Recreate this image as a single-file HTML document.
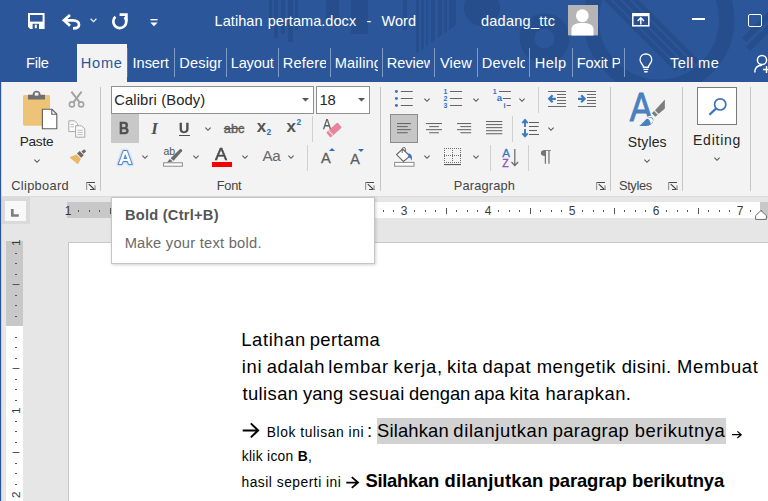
<!DOCTYPE html><html><head><meta charset="utf-8"><title>Latihan pertama.docx - Word</title><style>
*{box-sizing:border-box;margin:0;padding:0}
html,body{width:768px;height:501px;overflow:hidden;background:#e6e6e6;font-family:"Liberation Sans",sans-serif;}
.abs{position:absolute}
#top{position:absolute;left:0;top:0;width:768px;height:82px;background:#2b579a;overflow:hidden}
.tt{position:absolute;color:#fff;font-size:14.5px;white-space:nowrap;line-height:20px}
.tab{position:absolute;top:52px;height:22px;color:#fff;font-size:14.6px;line-height:22px;white-space:nowrap;overflow:hidden}
.tsep{position:absolute;top:48px;width:1px;height:29px;background:#7f9ac4}
#ribbon{position:absolute;left:2px;top:82px;width:766px;height:114.5px;background:#f3f3f3;border-bottom:1px solid #dcdcdc}
.rl{position:absolute;color:#444;font-size:12.8px;line-height:16px;white-space:nowrap;top:178px}
.gsep{position:absolute;top:87px;width:1px;height:104px;background:#c6c6c6}
.ssep{position:absolute;width:1px;height:26px;background:#d0d0d0}
.big{position:absolute;color:#262626;font-size:14px;line-height:18px;white-space:nowrap}
svg{position:absolute;overflow:visible}
.doc{position:absolute;white-space:nowrap;color:#000;}
</style></head><body>
<div id="top">
<svg width="768" height="82" viewBox="0 0 768 82" style="left:0;top:0">
<defs><clipPath id="cIn"><circle cx="659" cy="19.5" r="58"/></clipPath><clipPath id="cSt"><path d="M410 0 H460 V22 L410 58 Z"/></clipPath></defs>
<g fill="none" stroke="#264e8c">
<circle cx="659" cy="19.5" r="67.7" stroke-width="15.5"/>
<circle cx="544.5" cy="38.5" r="17.5" stroke-width="15"/>
</g>
<circle cx="482" cy="8" r="18" fill="#264e8c"/>
<g fill="#264e8c">
<rect x="269" y="0" width="3" height="30"/><rect x="274" y="0" width="4" height="38"/><rect x="281" y="0" width="4" height="34"/><rect x="288" y="0" width="5" height="42"/><rect x="295" y="0" width="3" height="30"/>
<rect x="326" y="0" width="13" height="26"/><rect x="351" y="0" width="17" height="34"/>
<rect x="403" y="0" width="4" height="30"/>
<g clip-path="url(#cSt)"><rect x="416" y="0" width="3" height="60"/><rect x="421" y="0" width="3" height="60"/><rect x="426" y="0" width="2" height="60"/><rect x="431" y="0" width="4" height="60"/><rect x="438" y="0" width="4" height="60"/><rect x="444" y="0" width="3" height="60"/><rect x="449" y="0" width="7" height="60"/></g>
</g>
<g stroke="#264e8c" stroke-width="4.8" clip-path="url(#cIn)">
<path d="M597 -10 L677 70 M606.5 -10 L686.5 70 M616 -10 L696 70 M625.5 -10 L705.5 70"/>
</g>
<g stroke="#264e8c" stroke-width="6">
<path d="M772 12 L744 40 M772 25 L748 49"/>
</g>
</svg>
<svg width="17" height="16" viewBox="0 0 17 16" style="left:27.8px;top:13.1px">
<path d="M1 1 H15.6 V15 H2.6 L1 13.4 Z" fill="none" stroke="#fff" stroke-width="2"/>
<rect x="1" y="8.6" width="14.6" height="6.4" fill="#fff"/><rect x="4.6" y="10.8" width="6.4" height="5.2" fill="#2b579a"/><rect x="6.8" y="11.6" width="2" height="3.6" fill="#fff"/>
</svg>
<svg width="19" height="16" viewBox="0 0 19 16" style="left:62px;top:13.5px">
<path d="M8 0.9 L1.9 6.3 L8 11.7" fill="none" stroke="#fff" stroke-width="2.7" stroke-linejoin="miter"/>
<path d="M2.6 6.3 H11 C14.8 6.3 17 8.3 17 10.7 C17 13 15 14.3 11 14.3" fill="none" stroke="#fff" stroke-width="2.7"/>
</svg>
<svg width="7" height="5" viewBox="0 0 7 5" style="left:89.8px;top:18.2px"><path d="M0.6 0.8 L3.5 3.7 L6.4 0.8" fill="none" stroke="#e8edf5" stroke-width="1.3"/></svg>
<svg width="18" height="16" viewBox="0 0 18 16" style="left:111px;top:13.3px">
<path d="M4.4 3.8 A6.5 6.5 0 1 0 13.6 4.2" fill="none" stroke="#fff" stroke-width="2.7"/>
<path d="M8.6 1.6 H15.4 V8" fill="none" stroke="#fff" stroke-width="2.7"/>
</svg>
<svg width="8" height="8" viewBox="0 0 8 8" style="left:150px;top:19px"><rect x="0.5" y="0" width="7" height="1.4" fill="#fff"/><path d="M0.3 3.4 H7.7 L4 7.2 Z" fill="#fff"/></svg>
<div class="tt" style="left:214.61px;top:11px;word-spacing:1px;letter-spacing:0.059px" id="title">Latihan pertama.docx&nbsp; -&nbsp; Word</div>
<div class="tt" style="left:480.92px;top:11px;letter-spacing:0.271px" id="user">dadang_ttc</div>
<svg width="30" height="30.4" viewBox="0 0 31 31" preserveAspectRatio="none" style="left:568px;top:4.9px"><rect width="31" height="31" fill="#b5b5b5"/>
<circle cx="14.8" cy="11" r="6.6" fill="#fff"/><path d="M3.6 31 V25 C3.6 20 8 18.4 14.8 18.4 C21.6 18.4 26.4 20 26.4 25 V31 Z" fill="#fff"/></svg>
<svg width="18" height="14" viewBox="0 0 18 14" style="left:631.6px;top:13.2px"><rect x="0.8" y="0.8" width="16" height="12" fill="none" stroke="#fff" stroke-width="1.5"/><rect x="0.8" y="0.8" width="16" height="2.4" fill="#fff"/>
<path d="M8.8 11.6 V5.4 M5.6 8 L8.8 4.8 L12 8" fill="none" stroke="#fff" stroke-width="1.4"/></svg>
<div class="abs" style="left:692px;top:18.3px;width:12.5px;height:1.8px;background:#fff"></div>
<div class="abs" style="left:748.3px;top:13.5px;width:13.6px;height:13.2px;border:1.7px solid #fff;border-radius:2px"></div>
<div class="tab" style="left:25.91px;width:40px;letter-spacing:-0.18px" id="tFile">File</div>
<div class="abs" style="left:77px;top:44px;width:50px;height:38px;background:#f3f3f3"></div>
<div class="tab" style="left:80.65px;width:46px;color:#2b579a;letter-spacing:0.793px" id="tHome">Home</div>
<div class="tab" style="left:132.61px;width:41.7px;letter-spacing:-0.074px" id="t0">Insert</div>
<div class="tab" style="left:179.3px;width:43.2px;letter-spacing:0.15px" id="t1">Design</div>
<div class="tab" style="left:230.7px;width:43.7px;letter-spacing:-0.154px" id="t2">Layout</div>
<div class="tab" style="left:282.8px;width:43.7px;letter-spacing:0.15px" id="t3">References</div>
<div class="tab" style="left:334.8px;width:43.7px;letter-spacing:0.15px" id="t4">Mailings</div>
<div class="tab" style="left:386.8px;width:43.7px;letter-spacing:-0.05px" id="t5">Review</div>
<div class="tab" style="left:440px;width:34.7px;letter-spacing:0.11px" id="t6">View</div>
<div class="tab" style="left:481.8px;width:43.2px;letter-spacing:0.15px" id="t7">Developer</div>
<div class="tab" style="left:534.7px;width:34.2px;letter-spacing:0.476px" id="t8">Help</div>
<div class="tab" style="left:576.8px;width:43.7px;letter-spacing:-0.15px" id="t9">Foxit PDF</div>
<div class="tsep" style="left:127px;background:#5474ad"></div>
<div class="tsep" style="left:174px"></div>
<div class="tsep" style="left:226px"></div>
<div class="tsep" style="left:278px"></div>
<div class="tsep" style="left:330px"></div>
<div class="tsep" style="left:382px"></div>
<div class="tsep" style="left:434px"></div>
<div class="tsep" style="left:477px"></div>
<div class="tsep" style="left:529px"></div>
<div class="tsep" style="left:572px"></div>
<div class="tsep" style="left:624px"></div>
<svg width="13.8" height="20" viewBox="0 0 16 20" preserveAspectRatio="none" style="left:639.1px;top:53.2px">
<path d="M5.2 14.2 C5.2 11.5 1.2 10.5 1.2 6.8 C1.2 3.2 4.2 0.9 8 0.9 C11.8 0.9 14.8 3.2 14.8 6.8 C14.8 10.5 10.8 11.5 10.8 14.2 Z" fill="none" stroke="#fff" stroke-width="1.5"/>
<path d="M5.2 16.4 H10.8 M6 18.8 H10" stroke="#fff" stroke-width="1.4"/></svg>
<div class="tab" style="left:670px;width:60px;letter-spacing:0.421px" id="tTell">Tell me</div>
<svg width="16" height="20" viewBox="0 0 16 20" style="left:754px;top:54px"><circle cx="8" cy="6" r="4.6" fill="none" stroke="#fff" stroke-width="1.5"/>
<path d="M0.8 18.5 C0.8 13.5 4 11.2 8 11.2" fill="none" stroke="#fff" stroke-width="1.5"/><path d="M9 15.4 H16 M12.5 12 V19" stroke="#fff" stroke-width="1.5"/></svg>
</div>
<div class="abs" style="left:0;top:82px;width:1px;height:419px;background:#2b579a"></div><div class="abs" style="left:1px;top:82px;width:1px;height:115px;background:#d0d8e4"></div><div class="abs" style="left:1px;top:197px;width:1px;height:304px;background:#c6ceda"></div>
<div id="ribbon"></div>
<svg width="36" height="40" viewBox="0 0 36 40" style="left:22px;top:90px">
<rect x="1" y="5" width="27" height="30.7" rx="1.6" fill="#edc377"/>
<path d="M6 9.4 V4.8 H10.6 C10.8 2.2 12.4 0.8 14.6 0.8 C16.8 0.8 18.4 2.2 18.6 4.8 H23 V9.4 Z" fill="#6f6f6f"/><rect x="12.8" y="2.6" width="3.6" height="3" fill="#f3f3f3"/>
<path d="M20.4 19.3 H30 L34.8 24.1 V38.7 H20.4 Z" fill="#fff" stroke="#5e5e5e" stroke-width="1.1"/><path d="M29.8 19.5 V24.3 H34.6" fill="none" stroke="#5e5e5e" stroke-width="1.1"/>
</svg>
<div class="big" style="left:19.71px;top:133px;font-size:13.6px;letter-spacing:-0.229px" id="bPaste">Paste</div>
<svg width="6" height="4" viewBox="0 0 6 3.6" style="left:34px;top:159px"><path d="M0.4 0.5 L3 3.1 L5.6 0.5" fill="none" stroke="#555" stroke-width="1.1"/></svg>
<svg width="17" height="17" viewBox="0 0 17 17" style="left:68px;top:90.5px"><g fill="none" stroke="#a3a3a3">
<path d="M3.4 0.6 L11.4 11.2 M13.6 0.6 L5.6 11.2" stroke-width="2"/><circle cx="3.9" cy="13.4" r="2.5" stroke-width="1.6"/><circle cx="13.1" cy="13.4" r="2.5" stroke-width="1.6"/></g></svg>
<svg width="18" height="18" viewBox="0 0 18 18" style="left:68px;top:119.5px"><g fill="#fbfbfb" stroke="#a8a8a8" stroke-width="1">
<path d="M0.8 0.8 H6.6 L9.6 3.8 V11.6 H0.8 Z"/><path d="M7.6 5.8 H13.6 L16.8 9 V17.2 H7.6 Z"/></g>
<g stroke="#b5b5b5" stroke-width="0.9"><path d="M2.4 4.4 H6 M2.4 6.8 H6 M9.4 10.2 H14.8 M9.4 12.4 H14.8 M9.4 14.6 H14.8"/></g></svg>
<svg width="18" height="16" viewBox="0 0 18 16" style="left:68.6px;top:149px">
<path d="M0.3 8.2 L7.6 5.6 L12 10 L8.8 15.2 Z" fill="#e9b968"/>
<path d="M8 4.6 L10.6 2 L14.8 6.2 L12.2 8.8 Z" fill="#6a6a6a"/><path d="M12.4 2.6 L15.2 0.2 L17.2 2.2 L14.6 4.8 Z" fill="#6a6a6a"/></svg>
<div class="rl" style="left:11.18px;letter-spacing:0.345px" id="lClip">Clipboard</div>
<svg width="10" height="9" viewBox="0 0 10 9" style="left:86.2px;top:182px"><rect x="0" y="0" width="9" height="1" fill="#4a4a4a"/><rect x="0" y="0" width="1.2" height="8" fill="#9a9a9a"/><path d="M2.8 2.2 L8.6 7.6" stroke="#3a3a3a" stroke-width="1.1"/><rect x="4" y="7" width="5.6" height="1" fill="#4a4a4a"/><rect x="8.4" y="3.2" width="1.2" height="4.8" fill="#9a9a9a"/></svg>
<div class="gsep" style="left:100px"></div>
<div class="abs" style="left:111px;top:85.5px;width:203px;height:28px;background:#fff;border:1px solid #8f8f8f"></div>
<div class="big" style="left:114.18px;top:91px;font-size:14.8px;letter-spacing:0.115px" id="fName">Calibri (Body)</div>
<svg width="7" height="4" viewBox="0 0 7 4" style="left:301.5px;top:98px"><path d="M0 0 H7 L3.5 3.6 Z" fill="#555"/></svg>
<div class="abs" style="left:316px;top:85.5px;width:54px;height:28px;background:#fff;border:1px solid #8f8f8f"></div>
<div class="big" style="left:319.51px;top:91px;font-size:14.8px;letter-spacing:-0.277px" id="fSize">18</div>
<svg width="7" height="4" viewBox="0 0 7 4" style="left:357.5px;top:98px"><path d="M0 0 H7 L3.5 3.6 Z" fill="#555"/></svg>
<div class="abs" style="left:111px;top:114px;width:28px;height:29px;background:#c8c8c8"></div>
<div class="abs" style="left:119.2px;top:117.6px;font-size:16.2px;font-weight:bold;color:#505050;line-height:20px;transform:scaleX(0.86);transform-origin:0 0;-webkit-text-stroke:0.45px #505050" id="bB">B</div>
<div class="abs" style="left:151.3px;top:118.5px;font-size:17px;font-weight:bold;font-style:italic;color:#505050;line-height:20px;font-family:'Liberation Serif',serif" id="bI">I</div>
<div class="abs" style="left:179.3px;top:117.6px;font-size:15.2px;font-weight:bold;color:#505050;line-height:20px;transform:scaleX(0.93);transform-origin:0 0;-webkit-text-stroke:0.3px #505050" id="bU">U</div>
<div class="abs" style="left:179.3px;top:134.8px;width:10.3px;height:1.2px;background:#505050"></div>
<svg width="6" height="4" viewBox="0 0 6 3.6" style="left:205px;top:126.5px"><path d="M0.4 0.5 L3 3.1 L5.6 0.5" fill="none" stroke="#555" stroke-width="1.1"/></svg>
<div class="abs" style="left:223.8px;top:119.3px;font-size:12.8px;color:#5c5c5c;line-height:20px;text-decoration:line-through;-webkit-text-stroke:0.35px #5c5c5c" id="bAbc">abc</div>
<div class="abs" style="left:256.8px;top:117.3px;font-size:17px;font-weight:bold;color:#555;line-height:20px" id="bSub">x</div>
<div class="abs" style="left:266.4px;top:127.3px;font-size:8.4px;font-weight:bold;color:#2f6dbf;line-height:10px">2</div>
<div class="abs" style="left:286.6px;top:117.3px;font-size:17px;font-weight:bold;color:#555;line-height:20px" id="bSup">x</div>
<div class="abs" style="left:296.6px;top:117.2px;font-size:8.4px;font-weight:bold;color:#2f6dbf;line-height:10px">2</div>
<div class="ssep" style="left:312px;top:115.5px"></div>
<div class="abs" style="left:323.4px;top:116.3px;font-size:14px;color:#5a5a5a;line-height:16px;transform:scaleX(0.86);transform-origin:0 0;-webkit-text-stroke:0.25px #5a5a5a" id="bClrA">A</div>
<svg width="20" height="20" viewBox="0 0 20 20" style="left:323.7px;top:120.3px"><g transform="translate(10,10) rotate(-42)"><rect x="-7.6" y="-3.4" width="15.2" height="6.8" rx="1.3" fill="#e8849b"/><rect x="-4.9" y="-3.4" width="1" height="6.8" fill="#f7e9ec"/></g></svg>
<svg width="20" height="20" viewBox="0 0 20 20" style="left:115.2px;top:146.6px"><defs><filter id="gl" x="-30%" y="-30%" width="160%" height="160%"><feGaussianBlur stdDeviation="0.9"/></filter></defs>
<text x="10" y="17" text-anchor="middle" font-family="Liberation Sans, sans-serif" font-size="19" font-weight="bold" fill="none" stroke="#9cc3f0" stroke-width="2.4" filter="url(#gl)">A</text>
<text x="10" y="17" text-anchor="middle" font-family="Liberation Sans, sans-serif" font-size="19" font-weight="bold" fill="#fff" stroke="#2f78cf" stroke-width="1.7" paint-order="stroke">A</text></svg>
<svg width="6" height="4" viewBox="0 0 6 3.6" style="left:141.8px;top:155px"><path d="M0.4 0.5 L3 3.1 L5.6 0.5" fill="none" stroke="#555" stroke-width="1.1"/></svg>
<div class="abs" style="left:163.5px;top:144.5px;font-size:10.5px;color:#555;line-height:12px">ab</div>
<svg width="20" height="19" viewBox="0 0 20 19" style="left:163px;top:148px"><path d="M7.6 10.2 L16.8 1.2 C18 0.4 19.8 1.8 19 3.2 L10.6 12.8 Z" fill="#6a6a6a"/><path d="M6.8 11 L9.8 13.6 L4 14.4 Z" fill="#6a6a6a"/>
<rect x="0.6" y="14.8" width="18.8" height="3.4" fill="#fff" stroke="#8a8a8a" stroke-width="1"/></svg>
<svg width="6" height="4" viewBox="0 0 6 3.6" style="left:192.7px;top:155px"><path d="M0.4 0.5 L3 3.1 L5.6 0.5" fill="none" stroke="#555" stroke-width="1.1"/></svg>
<div class="abs" style="left:215.4px;top:144.2px;font-size:17.2px;color:#4a4a4a;line-height:20px;-webkit-text-stroke:0.5px #4a4a4a;transform:scaleX(1.05);transform-origin:0 0" id="bFc">A</div>
<div class="abs" style="left:212px;top:162px;width:20px;height:4.8px;background:#f80000"></div>
<svg width="6" height="4" viewBox="0 0 6 3.6" style="left:242px;top:155px"><path d="M0.4 0.5 L3 3.1 L5.6 0.5" fill="none" stroke="#555" stroke-width="1.1"/></svg>
<div class="abs" style="left:262.6px;top:146.4px;font-size:15.2px;color:#666;line-height:20px;letter-spacing:-0.4px" id="bAa">Aa</div>
<svg width="6" height="4" viewBox="0 0 6 3.6" style="left:288.1px;top:155px"><path d="M0.4 0.5 L3 3.1 L5.6 0.5" fill="none" stroke="#555" stroke-width="1.1"/></svg>
<div class="ssep" style="left:307px;top:144.5px"></div>
<div class="abs" style="left:321px;top:149.2px;font-size:14.6px;color:#5c5c5c;line-height:18px;-webkit-text-stroke:0.3px #5c5c5c" id="bGrow">A</div>
<svg width="6" height="3" viewBox="0 0 6 3" style="left:329.2px;top:148.3px"><path d="M0 3 H6 L3 0 Z" fill="#2f6dbf"/></svg>
<div class="abs" style="left:350.2px;top:150px;font-size:14.3px;color:#5c5c5c;line-height:18px;-webkit-text-stroke:0.3px #5c5c5c" id="bShrink">A</div>
<svg width="6" height="3" viewBox="0 0 6 3" style="left:358px;top:148.6px"><path d="M0 0 H6 L3 3 Z" fill="#2f6dbf"/></svg>
<div class="rl" style="left:216.73px;letter-spacing:-0.237px" id="lFont">Font</div>
<svg width="10" height="9" viewBox="0 0 10 9" style="left:365.2px;top:182px"><rect x="0" y="0" width="9" height="1" fill="#4a4a4a"/><rect x="0" y="0" width="1.2" height="8" fill="#9a9a9a"/><path d="M2.8 2.2 L8.6 7.6" stroke="#3a3a3a" stroke-width="1.1"/><rect x="4" y="7" width="5.6" height="1" fill="#4a4a4a"/><rect x="8.4" y="3.2" width="1.2" height="4.8" fill="#9a9a9a"/></svg>
<div class="gsep" style="left:380px"></div>
<svg width="19" height="17" viewBox="0 0 19 17" style="left:394px;top:90px"><circle cx="2.4" cy="1.5" r="1.45" fill="#2f72c8"/><rect x="6.8" y="1" width="12" height="1" fill="#666"/><circle cx="2.4" cy="8.5" r="1.45" fill="#2f72c8"/><rect x="6.8" y="8" width="12" height="1" fill="#666"/><circle cx="2.4" cy="15.5" r="1.45" fill="#2f72c8"/><rect x="6.8" y="15" width="12" height="1" fill="#666"/></svg>
<svg width="6" height="4" viewBox="0 0 6 3.6" style="left:424.3px;top:97.5px"><path d="M0.4 0.5 L3 3.1 L5.6 0.5" fill="none" stroke="#555" stroke-width="1.1"/></svg>
<svg width="19" height="17" viewBox="0 0 19 17" style="left:443px;top:90px"><text x="0.6" y="4" font-family="Liberation Sans, sans-serif" font-size="7" font-weight="bold" fill="#2f72c8">1</text><rect x="6.9" y="1" width="12.2" height="1" fill="#666"/><text x="0.6" y="11" font-family="Liberation Sans, sans-serif" font-size="7" font-weight="bold" fill="#2f72c8">2</text><rect x="6.9" y="8" width="12.2" height="1" fill="#666"/><text x="0.6" y="18" font-family="Liberation Sans, sans-serif" font-size="7" font-weight="bold" fill="#2f72c8">3</text><rect x="6.9" y="15" width="12.2" height="1" fill="#666"/></svg>
<svg width="6" height="4" viewBox="0 0 6 3.6" style="left:473px;top:97.5px"><path d="M0.4 0.5 L3 3.1 L5.6 0.5" fill="none" stroke="#555" stroke-width="1.1"/></svg>
<svg width="19" height="17" viewBox="0 0 19 17" style="left:492px;top:90px"><text x="0.7" y="4" font-family="Liberation Sans, sans-serif" font-size="7" font-weight="bold" fill="#2f72c8">1</text><rect x="7" y="1" width="11.9" height="1" fill="#666"/><text x="4.8" y="10.6" font-family="Liberation Sans, sans-serif" font-size="9.5" font-weight="bold" fill="#2f72c8">a</text><rect x="10.8" y="8" width="8.1" height="1" fill="#666"/><text x="11.4" y="18" font-family="Liberation Sans, sans-serif" font-size="7.5" font-weight="bold" fill="#2f72c8">i</text><rect x="14.6" y="15" width="4.3" height="1" fill="#666"/></svg>
<svg width="6" height="4" viewBox="0 0 6 3.6" style="left:519px;top:97.5px"><path d="M0.4 0.5 L3 3.1 L5.6 0.5" fill="none" stroke="#555" stroke-width="1.1"/></svg>
<div class="ssep" style="left:538px;top:86.5px"></div>
<svg width="19" height="17" viewBox="0 0 19 17" style="left:548px;top:91px"><rect x="0" y="0" width="18" height="1" fill="#6a6a6a"/><rect x="9" y="3" width="9" height="1" fill="#6a6a6a"/><rect x="9" y="6" width="9" height="1" fill="#6a6a6a"/><rect x="9" y="9" width="9" height="1" fill="#6a6a6a"/><rect x="9" y="12" width="9" height="1" fill="#6a6a6a"/><rect x="0" y="15" width="18" height="1" fill="#6a6a6a"/><path d="M7.8 7.8 H1.4 M4.6 4.3 L1.2 7.8 L4.6 11.3" fill="none" stroke="#3c76bd" stroke-width="2.2"/></svg>
<svg width="19" height="17" viewBox="0 0 19 17" style="left:578px;top:91px"><rect x="0" y="0" width="18" height="1" fill="#6a6a6a"/><rect x="9" y="3" width="9" height="1" fill="#6a6a6a"/><rect x="9" y="6" width="9" height="1" fill="#6a6a6a"/><rect x="9" y="9" width="9" height="1" fill="#6a6a6a"/><rect x="9" y="12" width="9" height="1" fill="#6a6a6a"/><rect x="0" y="15" width="18" height="1" fill="#6a6a6a"/><path d="M0 7.8 H6.4 M3.2 4.3 L6.6 7.8 L3.2 11.3" fill="none" stroke="#3c76bd" stroke-width="2.2"/></svg>
<div class="abs" style="left:390px;top:114px;width:28px;height:29px;background:#c6c6c6;border:1px solid #8c8c8c"></div>
<svg width="17" height="14" viewBox="0 0 17 14" style="left:397px;top:122.7px"><rect x="0" y="0" width="14" height="1.05" fill="#676767"/><rect x="0" y="3.07" width="10.7" height="1.05" fill="#676767"/><rect x="0" y="6.14" width="14" height="1.05" fill="#676767"/><rect x="0" y="9.21" width="10.7" height="1.05" fill="#676767"/></svg>
<svg width="17" height="14" viewBox="0 0 17 14" style="left:426px;top:122.7px"><rect x="0" y="0" width="16" height="1.05" fill="#676767"/><rect x="3.2" y="3.07" width="9.7" height="1.05" fill="#676767"/><rect x="0" y="6.14" width="16" height="1.05" fill="#676767"/><rect x="3.2" y="9.21" width="9.7" height="1.05" fill="#676767"/></svg>
<svg width="17" height="14" viewBox="0 0 17 14" style="left:456.8px;top:122.7px"><rect x="0" y="0" width="14.2" height="1.05" fill="#676767"/><rect x="3.4" y="3.07" width="10.8" height="1.05" fill="#676767"/><rect x="0" y="6.14" width="14.2" height="1.05" fill="#676767"/><rect x="3.4" y="9.21" width="10.8" height="1.05" fill="#676767"/></svg>
<svg width="17" height="14" viewBox="0 0 17 14" style="left:486px;top:121px"><rect x="0" y="0" width="16.3" height="1.05" fill="#676767"/><rect x="0" y="3.05" width="16.3" height="1.05" fill="#676767"/><rect x="0" y="6.1" width="16.3" height="1.05" fill="#676767"/><rect x="0" y="9.15" width="16.3" height="1.05" fill="#676767"/><rect x="0" y="12.2" width="16.3" height="1.05" fill="#676767"/></svg>
<div class="ssep" style="left:512px;top:115.5px"></div>
<svg width="18" height="19" viewBox="0 0 18 19" style="left:521px;top:119px"><path d="M4 1.1 V7.9 M1.3 4.1 L4 1 L6.7 4.1 M4 10.1 V17.3 M1.3 14.3 L4 17.4 L6.7 14.3" fill="none" stroke="#4178be" stroke-width="1.9"/><rect x="8" y="3" width="10" height="1" fill="#5e5e5e"/><rect x="8" y="7" width="9.6" height="1" fill="#5e5e5e"/><rect x="8" y="11" width="8" height="1" fill="#5e5e5e"/><rect x="8" y="15" width="10" height="1" fill="#5e5e5e"/></svg>
<svg width="6" height="4" viewBox="0 0 6 3.6" style="left:548.2px;top:126.7px"><path d="M0.4 0.5 L3 3.1 L5.6 0.5" fill="none" stroke="#555" stroke-width="1.1"/></svg>
<svg width="21" height="20" viewBox="0 0 21 20" style="left:393.5px;top:147px">
<path d="M8.6 2 L16 9 L9.4 14.4 L2.6 7.6 Z" fill="#fff" stroke="#666" stroke-width="1.1"/><path d="M8.2 6 V1.6 C8.2 0.2 11.4 0.2 11.4 1.6 V4.6" fill="none" stroke="#666" stroke-width="1"/>
<path d="M14.6 6.2 C17.6 7 18.6 9.6 17.6 13.4 C16.6 11.4 15.8 10.4 14.2 10 Z" fill="#3b74c5"/>
<rect x="0.6" y="15.4" width="19.4" height="3.8" fill="#fff" stroke="#8a8a8a" stroke-width="1"/></svg>
<svg width="6" height="4" viewBox="0 0 6 3.6" style="left:424.3px;top:155px"><path d="M0.4 0.5 L3 3.1 L5.6 0.5" fill="none" stroke="#555" stroke-width="1.1"/></svg>
<svg width="18" height="18" viewBox="0 0 18 18" style="left:444px;top:148px"><rect x="0" y="0" width="1" height="1" fill="#707070"/><rect x="0" y="2" width="1" height="1" fill="#707070"/><rect x="0" y="4" width="1" height="1" fill="#707070"/><rect x="0" y="6" width="1" height="1" fill="#707070"/><rect x="0" y="7" width="1" height="1" fill="#707070"/><rect x="0" y="8" width="1" height="1" fill="#707070"/><rect x="0" y="10" width="1" height="1" fill="#707070"/><rect x="0" y="12" width="1" height="1" fill="#707070"/><rect x="0" y="14" width="1" height="1" fill="#707070"/><rect x="2" y="0" width="1" height="1" fill="#707070"/><rect x="2" y="7" width="1" height="1" fill="#707070"/><rect x="2" y="14" width="1" height="1" fill="#707070"/><rect x="4" y="0" width="1" height="1" fill="#707070"/><rect x="4" y="7" width="1" height="1" fill="#707070"/><rect x="4" y="14" width="1" height="1" fill="#707070"/><rect x="6" y="0" width="1" height="1" fill="#707070"/><rect x="6" y="7" width="1" height="1" fill="#707070"/><rect x="6" y="14" width="1" height="1" fill="#707070"/><rect x="8" y="0" width="1" height="1" fill="#707070"/><rect x="8" y="2" width="1" height="1" fill="#707070"/><rect x="8" y="4" width="1" height="1" fill="#707070"/><rect x="8" y="6" width="1" height="1" fill="#707070"/><rect x="8" y="7" width="1" height="1" fill="#707070"/><rect x="8" y="8" width="1" height="1" fill="#707070"/><rect x="8" y="10" width="1" height="1" fill="#707070"/><rect x="8" y="12" width="1" height="1" fill="#707070"/><rect x="8" y="14" width="1" height="1" fill="#707070"/><rect x="10" y="0" width="1" height="1" fill="#707070"/><rect x="10" y="7" width="1" height="1" fill="#707070"/><rect x="10" y="14" width="1" height="1" fill="#707070"/><rect x="12" y="0" width="1" height="1" fill="#707070"/><rect x="12" y="7" width="1" height="1" fill="#707070"/><rect x="12" y="14" width="1" height="1" fill="#707070"/><rect x="14" y="0" width="1" height="1" fill="#707070"/><rect x="14" y="7" width="1" height="1" fill="#707070"/><rect x="14" y="14" width="1" height="1" fill="#707070"/><rect x="16" y="0" width="1" height="1" fill="#707070"/><rect x="16" y="2" width="1" height="1" fill="#707070"/><rect x="16" y="4" width="1" height="1" fill="#707070"/><rect x="16" y="6" width="1" height="1" fill="#707070"/><rect x="16" y="7" width="1" height="1" fill="#707070"/><rect x="16" y="8" width="1" height="1" fill="#707070"/><rect x="16" y="10" width="1" height="1" fill="#707070"/><rect x="16" y="12" width="1" height="1" fill="#707070"/><rect x="16" y="14" width="1" height="1" fill="#707070"/><rect x="0" y="16" width="17" height="1.1" fill="#5a5a5a"/></svg>
<svg width="6" height="4" viewBox="0 0 6 3.6" style="left:473px;top:155px"><path d="M0.4 0.5 L3 3.1 L5.6 0.5" fill="none" stroke="#555" stroke-width="1.1"/></svg>
<div class="ssep" style="left:490px;top:144.5px"></div>
<div class="abs" style="left:502.2px;top:147.1px;font-size:11.6px;color:#3b74c5;line-height:12px;-webkit-text-stroke:0.3px #3b74c5">A</div>
<div class="abs" style="left:502.2px;top:156.6px;font-size:10.5px;color:#8b4fb3;line-height:12px;-webkit-text-stroke:0.3px #8b4fb3">Z</div>
<svg width="8" height="18" viewBox="0 0 8 18" style="left:511.2px;top:149px"><path d="M3.8 0 V16.4 M0.5 13 L3.8 16.6 L7.1 13" fill="none" stroke="#666" stroke-width="1.2"/></svg>
<div class="ssep" style="left:527.5px;top:144.5px"></div>
<div class="abs" style="left:539.6px;top:147.2px;font-size:15.6px;color:#757575;line-height:20px;transform:scaleX(1.42);transform-origin:0 0" id="bPil">¶</div>
<div class="rl" style="left:453.81px;letter-spacing:0.173px" id="lPara">Paragraph</div>
<svg width="10" height="9" viewBox="0 0 10 9" style="left:595.7px;top:182px"><rect x="0" y="0" width="9" height="1" fill="#4a4a4a"/><rect x="0" y="0" width="1.2" height="8" fill="#9a9a9a"/><path d="M2.8 2.2 L8.6 7.6" stroke="#3a3a3a" stroke-width="1.1"/><rect x="4" y="7" width="5.6" height="1" fill="#4a4a4a"/><rect x="8.4" y="3.2" width="1.2" height="4.8" fill="#9a9a9a"/></svg>
<div class="gsep" style="left:610px"></div>
<svg width="60" height="46" viewBox="0 0 60 46" style="left:620px;top:86px">
<text transform="translate(9.7,34.7) scale(0.85,1)" font-family="Liberation Sans, sans-serif" font-size="40" fill="#4a80c0" stroke="#4a80c0" stroke-width="0.9">A</text>
<path d="M44.9 13.6 V22.6 L38.6 28 L35 24.2 Z" fill="#7d7d7d"/>
<path d="M34.1 25 L37.7 28.8 L35.4 30.8 L31.8 27.2 Z" fill="#7d7d7d"/>
<path d="M17.6 40.6 C22 37.6 24.6 33.2 28.2 31 C31.4 29.2 34.4 31.6 34 34.6 C33.6 38.2 30 40.6 25.6 40.6 Z" fill="#4a80c0"/>
<path d="M17.6 40.6 C22 37.6 24.6 33.2 28.2 31 C31.4 29.2 34.4 31.6 34 34.6 C33.6 38.2 30 40.6 25.6 40.6 Z" fill="none" stroke="#f3f3f3" stroke-width="1.2"/><path d="M26.8 32.2 C29.6 30.4 33.2 31.8 33 34.8 C32.8 36.4 32 37.6 30.6 38.2 C30.8 35.4 29.4 33.4 26.8 32.2 Z" fill="#fff"/>
</svg>
<div class="big" style="left:627.86px;top:132.5px;letter-spacing:0.118px" id="bStyles">Styles</div>
<svg width="6" height="4" viewBox="0 0 6 3.6" style="left:644px;top:158.5px"><path d="M0.4 0.5 L3 3.1 L5.6 0.5" fill="none" stroke="#555" stroke-width="1.1"/></svg>
<div class="rl" style="left:618.98px;letter-spacing:-0.351px" id="lStyles">Styles</div>
<svg width="10" height="9" viewBox="0 0 10 9" style="left:667.7px;top:182px"><rect x="0" y="0" width="9" height="1" fill="#4a4a4a"/><rect x="0" y="0" width="1.2" height="8" fill="#9a9a9a"/><path d="M2.8 2.2 L8.6 7.6" stroke="#3a3a3a" stroke-width="1.1"/><rect x="4" y="7" width="5.6" height="1" fill="#4a4a4a"/><rect x="8.4" y="3.2" width="1.2" height="4.8" fill="#9a9a9a"/></svg>
<div class="gsep" style="left:682px"></div>
<div class="abs" style="left:697px;top:87px;width:40px;height:38px;background:#fff;border:1px solid #7a7a7a"></div>
<svg width="20" height="20" viewBox="0 0 20 20" style="left:707.5px;top:97px"><circle cx="12.2" cy="7.4" r="5.6" fill="none" stroke="#3c74ba" stroke-width="1.7"/><path d="M8 11.6 L1.4 17.8" stroke="#3c74ba" stroke-width="2.2"/></svg>
<div class="big" style="left:693.03px;top:131px;letter-spacing:0.761px" id="bEdit">Editing</div>
<svg width="6" height="4" viewBox="0 0 6 3.6" style="left:714px;top:157px"><path d="M0.4 0.5 L3 3.1 L5.6 0.5" fill="none" stroke="#555" stroke-width="1.1"/></svg>
<div class="gsep" style="left:750px"></div>
<div class="abs" style="left:2px;top:197px;width:28px;height:27px;background:#dadada"></div>
<div class="abs" style="left:5px;top:200.5px;width:20.5px;height:20px;background:#f8f8f8"></div>
<svg width="8" height="8" viewBox="0 0 8 8" style="left:11px;top:209px"><path d="M1.3 0 V6.5 H7.8" fill="none" stroke="#7d7d7d" stroke-width="2.7"/></svg>
<div class="abs" style="left:67px;top:202px;width:85px;height:16px;background:#c8c8c8"></div>
<div class="abs" style="left:152px;top:202px;width:607.5px;height:16px;background:#fff"></div>
<div class="abs" style="left:759.5px;top:202px;width:9px;height:16px;background:#c8c8c8"></div>
<svg width="768" height="16" viewBox="0 0 768 16" style="left:0;top:202px"><text x="68" y="12.6" text-anchor="middle" font-family="Liberation Sans, sans-serif" font-size="12" fill="#3a3a3a">1</text><rect x="78" y="8" width="1" height="2" fill="#555"/><rect x="89" y="8" width="1" height="2" fill="#555"/><rect x="99" y="8" width="1" height="2" fill="#555"/><rect x="110" y="6" width="1" height="6" fill="#555"/><rect x="120" y="8" width="1" height="2" fill="#555"/><rect x="131" y="8" width="1" height="2" fill="#555"/><rect x="141" y="8" width="1" height="2" fill="#555"/><rect x="162" y="8" width="1" height="2" fill="#555"/><rect x="173" y="8" width="1" height="2" fill="#555"/><rect x="183" y="8" width="1" height="2" fill="#555"/><rect x="194" y="6" width="1" height="6" fill="#555"/><rect x="204" y="8" width="1" height="2" fill="#555"/><rect x="215" y="8" width="1" height="2" fill="#555"/><rect x="225" y="8" width="1" height="2" fill="#555"/><text x="236" y="12.6" text-anchor="middle" font-family="Liberation Sans, sans-serif" font-size="12" fill="#3a3a3a">1</text><rect x="246" y="8" width="1" height="2" fill="#555"/><rect x="257" y="8" width="1" height="2" fill="#555"/><rect x="267" y="8" width="1" height="2" fill="#555"/><rect x="278" y="6" width="1" height="6" fill="#555"/><rect x="288" y="8" width="1" height="2" fill="#555"/><rect x="299" y="8" width="1" height="2" fill="#555"/><rect x="309" y="8" width="1" height="2" fill="#555"/><text x="320" y="12.6" text-anchor="middle" font-family="Liberation Sans, sans-serif" font-size="12" fill="#3a3a3a">2</text><rect x="330" y="8" width="1" height="2" fill="#555"/><rect x="341" y="8" width="1" height="2" fill="#555"/><rect x="351" y="8" width="1" height="2" fill="#555"/><rect x="362" y="6" width="1" height="6" fill="#555"/><rect x="372" y="8" width="1" height="2" fill="#555"/><rect x="383" y="8" width="1" height="2" fill="#555"/><rect x="393" y="8" width="1" height="2" fill="#555"/><text x="404" y="12.6" text-anchor="middle" font-family="Liberation Sans, sans-serif" font-size="12" fill="#3a3a3a">3</text><rect x="414" y="8" width="1" height="2" fill="#555"/><rect x="425" y="8" width="1" height="2" fill="#555"/><rect x="435" y="8" width="1" height="2" fill="#555"/><rect x="446" y="6" width="1" height="6" fill="#555"/><rect x="456" y="8" width="1" height="2" fill="#555"/><rect x="467" y="8" width="1" height="2" fill="#555"/><rect x="477" y="8" width="1" height="2" fill="#555"/><text x="488" y="12.6" text-anchor="middle" font-family="Liberation Sans, sans-serif" font-size="12" fill="#3a3a3a">4</text><rect x="498" y="8" width="1" height="2" fill="#555"/><rect x="509" y="8" width="1" height="2" fill="#555"/><rect x="519" y="8" width="1" height="2" fill="#555"/><rect x="530" y="6" width="1" height="6" fill="#555"/><rect x="540" y="8" width="1" height="2" fill="#555"/><rect x="551" y="8" width="1" height="2" fill="#555"/><rect x="561" y="8" width="1" height="2" fill="#555"/><text x="572" y="12.6" text-anchor="middle" font-family="Liberation Sans, sans-serif" font-size="12" fill="#3a3a3a">5</text><rect x="582" y="8" width="1" height="2" fill="#555"/><rect x="593" y="8" width="1" height="2" fill="#555"/><rect x="603" y="8" width="1" height="2" fill="#555"/><rect x="614" y="6" width="1" height="6" fill="#555"/><rect x="624" y="8" width="1" height="2" fill="#555"/><rect x="635" y="8" width="1" height="2" fill="#555"/><rect x="645" y="8" width="1" height="2" fill="#555"/><text x="656" y="12.6" text-anchor="middle" font-family="Liberation Sans, sans-serif" font-size="12" fill="#3a3a3a">6</text><rect x="666" y="8" width="1" height="2" fill="#555"/><rect x="677" y="8" width="1" height="2" fill="#555"/><rect x="687" y="8" width="1" height="2" fill="#555"/><rect x="698" y="6" width="1" height="6" fill="#555"/><rect x="708" y="8" width="1" height="2" fill="#555"/><rect x="719" y="8" width="1" height="2" fill="#555"/><rect x="729" y="8" width="1" height="2" fill="#555"/><text x="740" y="12.6" text-anchor="middle" font-family="Liberation Sans, sans-serif" font-size="12" fill="#3a3a3a">7</text><rect x="750" y="8" width="1" height="2" fill="#555"/><rect x="761" y="8" width="1" height="2" fill="#555"/></svg>
<svg width="12" height="10" viewBox="0 0 12 10" style="left:754.8px;top:210px"><path d="M0.6 9.4 V5.6 L6 0.6 L11.4 5.6 V9.4 Z" fill="#fff" stroke="#6a6a6a" stroke-width="1"/></svg>
<div class="abs" style="left:6.1px;top:241px;width:16.9px;height:85px;background:#c8c8c8"></div>
<div class="abs" style="left:6.1px;top:326px;width:16.9px;height:175px;background:#fff"></div>
<svg width="18" height="501" viewBox="0 0 18 501" style="left:6px;top:0"><text transform="translate(14.3,242.6) rotate(-90)" text-anchor="middle" font-family="Liberation Sans, sans-serif" font-size="11.8" fill="#3a3a3a">1</text><rect x="9" y="253" width="2" height="1" fill="#555"/><rect x="9" y="263" width="2" height="1" fill="#555"/><rect x="9" y="274" width="2" height="1" fill="#555"/><rect x="6.6" y="284" width="6.8" height="1" fill="#555"/><rect x="9" y="295" width="2" height="1" fill="#555"/><rect x="9" y="305" width="2" height="1" fill="#555"/><rect x="9" y="316" width="2" height="1" fill="#555"/><rect x="9" y="337" width="2" height="1" fill="#555"/><rect x="9" y="347" width="2" height="1" fill="#555"/><rect x="9" y="358" width="2" height="1" fill="#555"/><rect x="6.6" y="368" width="6.8" height="1" fill="#555"/><rect x="9" y="379" width="2" height="1" fill="#555"/><rect x="9" y="389" width="2" height="1" fill="#555"/><rect x="9" y="400" width="2" height="1" fill="#555"/><text transform="translate(14.3,410.6) rotate(-90)" text-anchor="middle" font-family="Liberation Sans, sans-serif" font-size="11.8" fill="#3a3a3a">1</text><rect x="9" y="421" width="2" height="1" fill="#555"/><rect x="9" y="431" width="2" height="1" fill="#555"/><rect x="9" y="442" width="2" height="1" fill="#555"/><rect x="6.6" y="452" width="6.8" height="1" fill="#555"/><rect x="9" y="463" width="2" height="1" fill="#555"/><rect x="9" y="473" width="2" height="1" fill="#555"/><rect x="9" y="484" width="2" height="1" fill="#555"/><text transform="translate(14.3,494.6) rotate(-90)" text-anchor="middle" font-family="Liberation Sans, sans-serif" font-size="11.8" fill="#3a3a3a">2</text></svg>
<div class="abs" style="left:68px;top:242px;width:700px;height:259px;background:#fff;border-left:1px solid #c8c8c8;border-top:1px solid #c8c8c8"></div>
<div class="doc" style="left:241.27px;top:326px;font-size:18.4px;line-height:27.4px;letter-spacing:0.599px" id="d1w0">Latihan </div>
<div class="doc" style="left:309.7px;top:326px;font-size:18.4px;line-height:27.4px;letter-spacing:0.435px" id="d1w1">pertama</div>
<div class="doc" style="left:241.79px;top:353px;font-size:18.4px;line-height:27.4px;letter-spacing:0.73px" id="d2w0">ini </div>
<div class="doc" style="left:266.71px;top:353px;font-size:18.4px;line-height:27.4px;letter-spacing:0.52px" id="d2w1">adalah </div>
<div class="doc" style="left:328.15px;top:353px;font-size:18.4px;line-height:27.4px;letter-spacing:0.73px" id="d2w2">lembar </div>
<div class="doc" style="left:393.48px;top:353px;font-size:18.4px;line-height:27.4px;letter-spacing:0.73px" id="d2w3">kerja, </div>
<div class="doc" style="left:447px;top:353px;font-size:18.4px;line-height:27.4px;letter-spacing:0.561px" id="d2w4">kita </div>
<div class="doc" style="left:482.49px;top:353px;font-size:18.4px;line-height:27.4px;letter-spacing:0.541px" id="d2w5">dapat </div>
<div class="doc" style="left:536.66px;top:353px;font-size:18.4px;line-height:27.4px;letter-spacing:0.581px" id="d2w6">mengetik </div>
<div class="doc" style="left:621.63px;top:353px;font-size:18.4px;line-height:27.4px;letter-spacing:0.422px" id="d2w7">disini. </div>
<div class="doc" style="left:676.9px;top:353px;font-size:18.4px;line-height:27.4px;letter-spacing:0.73px" id="d2w8">Membuat</div>
<div class="doc" style="left:242.4px;top:380.4px;font-size:18.4px;line-height:27.4px;letter-spacing:0.422px" id="d3w0">tulisan </div>
<div class="doc" style="left:303px;top:380.4px;font-size:18.4px;line-height:27.4px;letter-spacing:0.076px" id="d3w1">yang </div>
<div class="doc" style="left:348.77px;top:380.4px;font-size:18.4px;line-height:27.4px;letter-spacing:0.47px" id="d3w2">sesuai </div>
<div class="doc" style="left:409.11px;top:380.4px;font-size:18.4px;line-height:27.4px;letter-spacing:-0.03px" id="d3w3">dengan </div>
<div class="doc" style="left:474px;top:380.4px;font-size:18.4px;line-height:27.4px;letter-spacing:-0.03px" id="d3w4">apa </div>
<div class="doc" style="left:509.56px;top:380.4px;font-size:18.4px;line-height:27.4px;letter-spacing:0.374px" id="d3w5">kita </div>
<div class="doc" style="left:545.41px;top:380.4px;font-size:18.4px;line-height:27.4px;letter-spacing:0.47px" id="d3w6">harapkan.</div>
<svg width="18" height="17" viewBox="0 0 18 17" style="left:242px;top:421.5px"><path d="M0.7 8.4 H15.8 M8.8 1.4 L16.1 8.4 L8.8 15.4" fill="none" stroke="#000" stroke-width="2"/></svg>
<div class="doc" style="left:266.76px;top:422.7px;font-size:13.8px;line-height:20px;letter-spacing:0.568px" id="d4a">Blok tulisan ini</div>
<div class="doc" style="left:367px;top:417.2px;font-size:18.4px;line-height:27.4px" id="d4c">:</div>
<div class="abs" style="left:377px;top:418px;width:349px;height:25.5px;background:#d2d2d2"></div>
<div class="doc" style="left:377.08px;top:417.2px;font-size:18.4px;line-height:27.4px;letter-spacing:0.14px" id="d4bw0">Silahkan </div>
<div class="doc" style="left:453.3px;top:417.2px;font-size:18.4px;line-height:27.4px;letter-spacing:0.64px" id="d4bw1">dilanjutkan </div>
<div class="doc" style="left:552.7px;top:417.2px;font-size:18.4px;line-height:27.4px;letter-spacing:0.346px" id="d4bw2">paragrap </div>
<div class="doc" style="left:634.7px;top:417.2px;font-size:18.4px;line-height:27.4px;letter-spacing:0.57px" id="d4bw3">berikutnya</div>
<svg width="10" height="8" viewBox="0 0 10 8" style="left:731.5px;top:430.5px"><path d="M0 3.7 H9 M5.4 0.4 L9.2 3.7 L5.4 7" fill="none" stroke="#000" stroke-width="1.2"/></svg>
<div class="doc" style="left:241.73px;top:446.6px;font-size:13.8px;line-height:20px;letter-spacing:0.308px" id="d5">klik icon <b>B</b>,</div>
<div class="doc" style="left:241.52px;top:472.6px;font-size:13.8px;line-height:20px;letter-spacing:0.506px" id="d6a">hasil seperti ini</div>
<svg width="14" height="13" viewBox="0 0 14 13" style="left:346px;top:475.5px"><path d="M0.3 6.5 H11.8 M5.8 1.1 L12.1 6.5 L5.8 11.9" fill="none" stroke="#000" stroke-width="1.75"/></svg>
<div class="doc" style="left:365.44px;top:466.8px;font-size:18.4px;line-height:27.4px;font-weight:bold;letter-spacing:-0.28px" id="d6bw0">Silahkan </div>
<div class="doc" style="left:444.51px;top:466.8px;font-size:18.4px;line-height:27.4px;font-weight:bold;letter-spacing:0.169px" id="d6bw1">dilanjutkan </div>
<div class="doc" style="left:548.66px;top:466.8px;font-size:18.4px;line-height:27.4px;font-weight:bold;letter-spacing:-0.104px" id="d6bw2">paragrap </div>
<div class="doc" style="left:632px;top:466.8px;font-size:18.4px;line-height:27.4px;font-weight:bold;letter-spacing:-0.089px" id="d6bw3">berikutnya</div>
<div class="abs" style="left:111px;top:197.3px;width:264px;height:67px;background:#fff;border:1px solid #c6c6c6;box-shadow:1px 1px 3px rgba(0,0,0,0.18)"></div>
<div class="abs" style="left:124.96px;top:206.4px;font-size:14.6px;font-weight:bold;color:#555;line-height:18px;white-space:nowrap;letter-spacing:0.264px" id="tipT">Bold (Ctrl+B)</div>
<div class="abs" style="left:124.64px;top:233.7px;font-size:14.7px;color:#6a6a6a;line-height:18px;white-space:nowrap;letter-spacing:0.243px" id="tipB">Make your text bold.</div>
</body></html>
